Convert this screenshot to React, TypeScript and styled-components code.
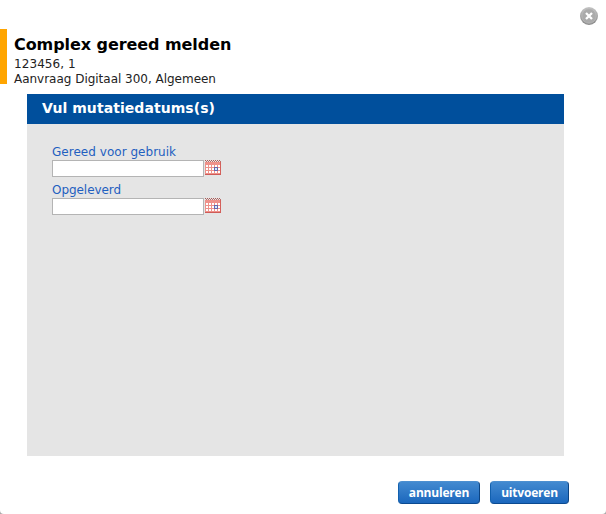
import React from "react";
import styled, { createGlobalStyle } from "styled-components";

const GlobalStyle = createGlobalStyle`
  body {
    margin: 0;
    background: #a9a9a9;
    font-family: Verdana, "DejaVu Sans", sans-serif;
  }
`;

const Dialog = styled.main`
  box-sizing: border-box;
  width: 606px;
  height: 514px;
  display: flex;
  flex-direction: column;
  background: #fff;
  border-radius: 0 0 4px 4px;
  overflow: hidden;
`;

const TopBar = styled.div`
  height: 29px;
  flex: none;
  display: flex;
  justify-content: flex-end;
  box-sizing: border-box;
  padding: 6px 7px 0 0;
`;

const CloseButton = styled.button`
  width: 20px;
  height: 20px;
  padding: 0;
  border: 0;
  background: none;
  svg { display: block; }
`;

const Heading = styled.header`
  box-sizing: border-box;
  height: 55px;
  flex: none;
  border-left: 7px solid #ffa500;
  padding: 6px 0 0 7px;
`;

const Title = styled.h1`
  margin: 0;
  font-size: 16px;
  line-height: 20px;
  letter-spacing: -0.07px;
  color: #000;
  white-space: nowrap;
`;

const Details = styled.div`
  padding-top: 2px;
`;

const Detail = styled.div<{ $spacing: number }>`
  font-size: 12px;
  line-height: 15px;
  letter-spacing: ${(p) => p.$spacing}px;
  color: #222;
  white-space: nowrap;
`;

const Panel = styled.section`
  width: 537px;
  height: 362px;
  flex: none;
  margin: 10px 0 0 27px;
  background: #e5e5e5;
`;

const PanelTitle = styled.h2`
  box-sizing: border-box;
  height: 30px;
  margin: 0;
  padding-left: 15px;
  background: #004f9c;
  color: #fff;
  font-size: 14px;
  line-height: 28px;
  letter-spacing: 0.06px;
  white-space: nowrap;
`;

const Form = styled.form`
  padding: 20px 0 0 25px;
`;

const Field = styled.div`
  height: 38px;
`;

const Label = styled.label<{ $spacing: number }>`
  display: block;
  height: 16px;
  font-size: 12px;
  line-height: 16px;
  letter-spacing: ${(p) => p.$spacing}px;
  color: #1f5fc0;
  white-space: nowrap;
`;

const InputRow = styled.div`
  display: flex;
  align-items: flex-start;
  gap: 1px;
  svg { display: block; }
`;

const DateInput = styled.input`
  box-sizing: border-box;
  width: 152px;
  height: 17px;
  margin: 0;
  padding: 0 2px;
  border: 1px solid #b4b4b4;
  border-radius: 0;
  background: #fff;
  font: inherit;
  font-size: 12px;
`;

const Actions = styled.footer`
  display: flex;
  gap: 10px;
  padding: 25px 0 0 398px;
`;

const ActionButton = styled.button<{ $width: number }>`
  box-sizing: border-box;
  width: ${(p) => p.$width}px;
  height: 23px;
  padding: 0;
  border: 1px solid #1260ae;
  border-top-color: #4c8fd0;
  border-right-color: #0b4382;
  border-bottom-color: #0b4a90;
  border-radius: 4px;
  background: linear-gradient(#438ad0, #1b67bd);
  color: #fff;
  font: bold 12px/21px "Open Sans", sans-serif;
  letter-spacing: -0.2px;
  white-space: nowrap;
`;

const CloseIcon = () => (
  <svg width="20" height="20" viewBox="0 0 20 20">
    <defs>
      <linearGradient id="disc" x1="0" y1="0" x2="0" y2="1">
        <stop offset="0" stopColor="#c4c4c4" />
        <stop offset="1" stopColor="#8a8a8a" />
      </linearGradient>
    </defs>
    <circle cx="10" cy="10" r="9" fill="url(#disc)" />
    <circle cx="10" cy="10" r="7.2" fill="#ababab" stroke="#bdbdbd" strokeWidth="0.7" />
    <path d="M7 7l6 6M13 7l-6 6" stroke="#fff" strokeWidth="2.3" />
  </svg>
);

const CalendarIcon = () => (
  <svg width="16" height="15" viewBox="0 0 16 15" shapeRendering="crispEdges">
    <path d="M0 2h16v13H0z" fill="#ee918a" />
    <path d="M0 .5h16" stroke="#a85b58" strokeDasharray="1 1" />
    <path d="M1 1.5h15" stroke="#b8706c" strokeDasharray="1 1" />
    {[5, 8, 11].map((y) =>
      [1, 4, 7, 10, 13].map((x) => (
        <rect key={`${x}-${y}`} x={x} y={y} width="2" height="2" fill="#fff" />
      ))
    )}
    <rect x="9" y="7" width="4" height="4" fill="#6468b0" />
    <rect x="10" y="8" width="2" height="2" fill="#d5edfb" />
    <rect x="15" y="2" width="1" height="13" fill="#d4605b" />
    <rect x="0" y="14" width="16" height="1" fill="#cf5b57" />
  </svg>
);

const fields = [
  { id: "gereed", label: "Gereed voor gebruik", spacing: 0.03 },
  { id: "opgeleverd", label: "Opgeleverd", spacing: -0.05 },
];

export default function App() {
  return (
    <>
      <GlobalStyle />
      <Dialog>
        <TopBar>
          <CloseButton aria-label="Sluiten"><CloseIcon /></CloseButton>
        </TopBar>
        <Heading>
          <Title>Complex gereed melden</Title>
          <Details>
            <Detail $spacing={0.08}>123456, 1</Detail>
            <Detail $spacing={-0.02}>Aanvraag Digitaal 300, Algemeen</Detail>
          </Details>
        </Heading>
        <Panel>
          <PanelTitle>Vul mutatiedatums(s)</PanelTitle>
          <Form>
            {fields.map((f) => (
              <Field key={f.id}>
                <Label htmlFor={f.id} $spacing={f.spacing}>{f.label}</Label>
                <InputRow>
                  <DateInput id={f.id} />
                  <CalendarIcon />
                </InputRow>
              </Field>
            ))}
          </Form>
        </Panel>
        <Actions>
          <ActionButton $width={82}>annuleren</ActionButton>
          <ActionButton $width={79}>uitvoeren</ActionButton>
        </Actions>
      </Dialog>
    </>
  );
}
